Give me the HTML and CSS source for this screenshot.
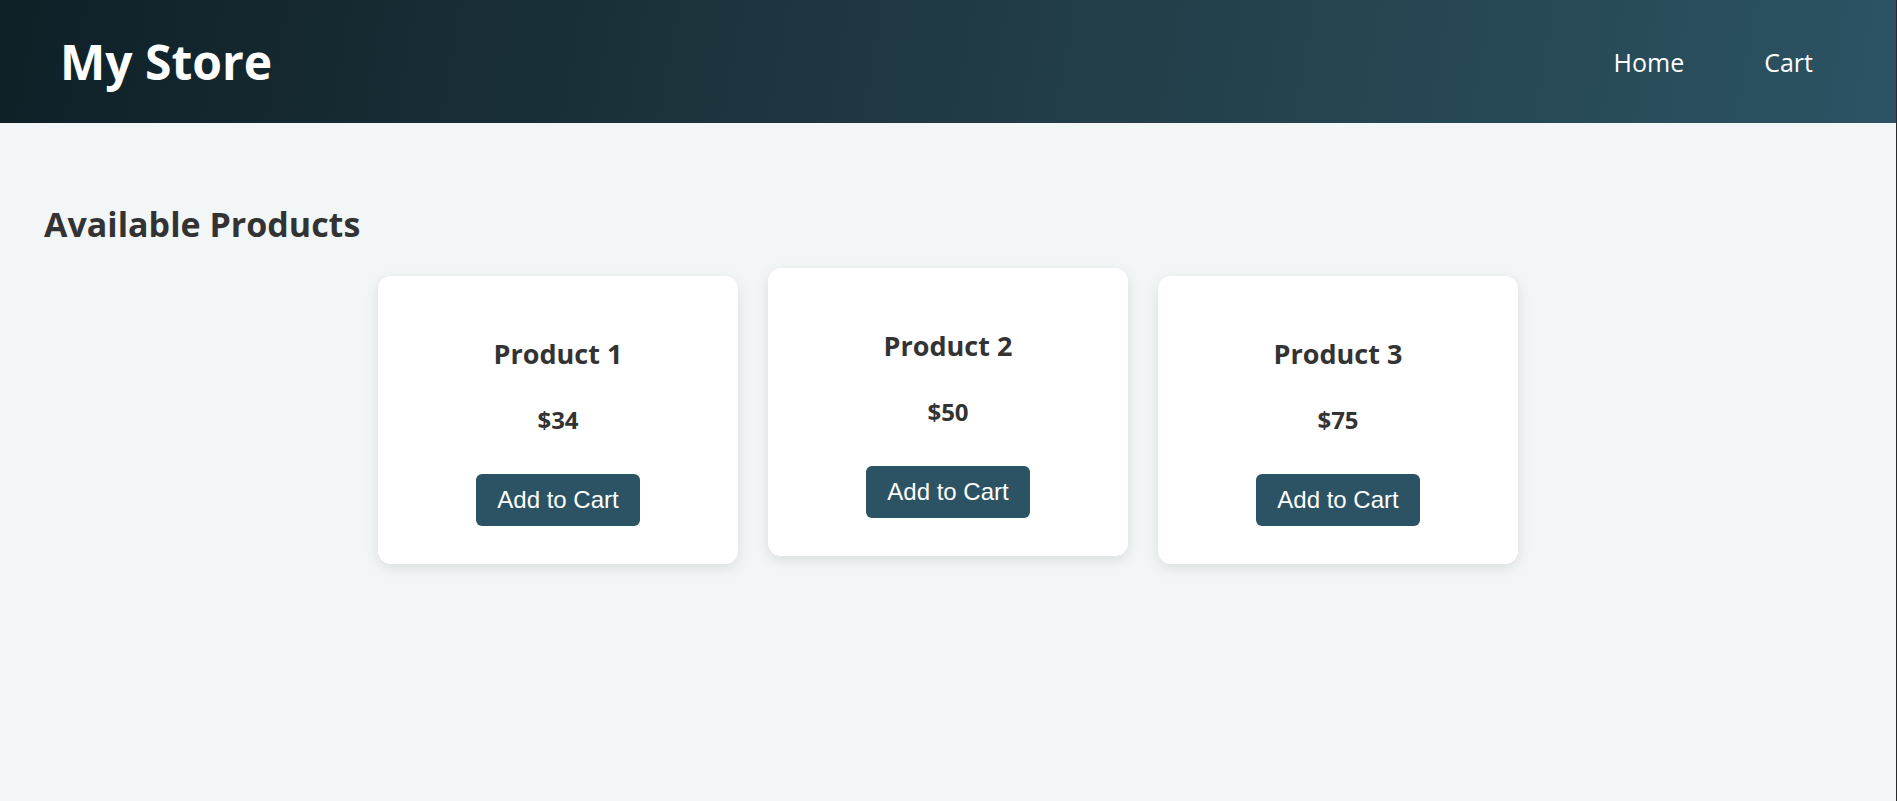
FILE: index.html
```html
<!DOCTYPE html>
<html lang="en">
<head>
<meta charset="utf-8">
<title>My Store</title>
<link rel="stylesheet" href="styles.css">
</head>
<body>
<header class="site-header">
  <h1 class="brand">My Store</h1>
  <nav class="nav">
    <a class="nav-link" href="#">Home</a>
    <a class="nav-link" href="#">Cart</a>
  </nav>
</header>
<main class="main">
  <h2 class="section-title">Available Products</h2>
  <div class="products">
    <div class="card">
      <h3 class="card-title">Product 1</h3>
      <p class="card-price">$34</p>
      <button class="btn">Add to Cart</button>
    </div>
    <div class="card card--raised">
      <h3 class="card-title">Product 2</h3>
      <p class="card-price">$50</p>
      <button class="btn">Add to Cart</button>
    </div>
    <div class="card">
      <h3 class="card-title">Product 3</h3>
      <p class="card-price">$75</p>
      <button class="btn">Add to Cart</button>
    </div>
  </div>
</main>
</body>
</html>
```
FILE: styles.css
```css
* { box-sizing: border-box; }
html, body { height: 100%; }
body {
  margin: 0;
  font-family: "Open Sans", "Noto Sans", sans-serif;
  background: #f3f6f7;
  color: #333;
  border-right: 1px solid #2a2a2a;
}
.site-header {
  height: 123px;
  display: flex;
  align-items: center;
  justify-content: space-between;
  padding: 0 83px 0 60px;
  background: linear-gradient(100deg, #0f2027 0%, #203a43 50%, #2c5364 100%);
  color: #fff;
}
.brand {
  margin: 0;
  font-size: 48px;
  font-weight: 700;
  line-height: 64px;
}
.nav { display: flex; gap: 80px; }
.nav-link {
  color: #fff;
  text-decoration: none;
  font-size: 25px;
  line-height: 36px;
}
.main { padding: 40px 44px; }
.section-title {
  margin: 35px 0 26px;
  font-size: 34px;
  line-height: 52px;
  font-weight: 700;
}
.products {
  display: flex;
  justify-content: center;
  gap: 30px;
  flex-wrap: wrap;
}
.card {
  width: 360px;
  background: #fff;
  border-radius: 13px;
  box-shadow: 0 4px 14px rgba(0, 0, 0, 0.1);
  padding: 60px 20px 38px;
  display: flex;
  flex-direction: column;
  align-items: center;
  text-align: center;
}
.card--raised { transform: translateY(-8px); }
.card-title {
  margin: 0;
  font-size: 27px;
  line-height: 36px;
  font-weight: 700;
}
.card-price {
  margin: 32px 0 0;
  font-size: 24px;
  line-height: 32px;
  font-weight: 700;
}
.btn {
  margin-top: 38px;
  background: #2c5364;
  color: #fff;
  border: 0;
  border-radius: 6px;
  padding: 12px 21px;
  font-family: "Liberation Sans", Arial, sans-serif;
  font-size: 24px;
  line-height: 28px;
  cursor: pointer;
}
```
